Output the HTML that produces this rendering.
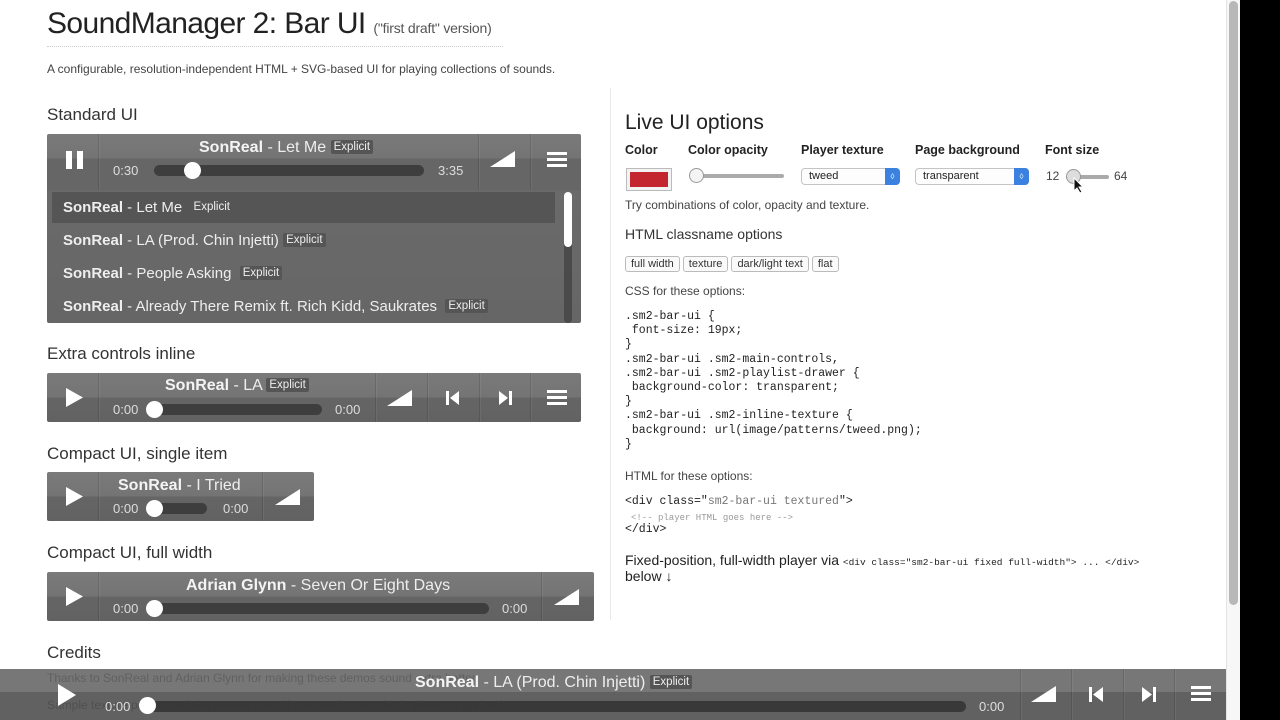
<!DOCTYPE html>
<html><head><meta charset="utf-8"><style>
*{margin:0;padding:0;box-sizing:border-box}
body{width:1280px;height:720px;position:relative;overflow:hidden;background:#fff;font-family:"Liberation Sans",sans-serif;color:#333}
.a{position:absolute;white-space:nowrap}
.pl{position:absolute;background:linear-gradient(#7a7a7a 0,#747474 50%,#656565 50%,#626262 100%);border-radius:2px}
.dv{position:absolute;top:0;bottom:0;width:1px;background:rgba(0,0,0,.12);box-shadow:1px 0 0 rgba(255,255,255,.06)}
.t{position:absolute;color:#eee;font-size:16px;white-space:nowrap}
.t b{color:#f4f4f4}
.ex{font-size:11.5px;background:#555;color:#eee;padding:1px 3px;border-radius:2px;vertical-align:2px}
.tm{position:absolute;color:#ddd;font-size:13px}
.bar{position:absolute;height:11px;border-radius:6px;background:#3e3e3e}
.knob{position:absolute;width:17px;height:17px;border-radius:50%;background:#fff}
.ic{position:absolute}
.h2{position:absolute;font-size:17px;color:#333;white-space:nowrap}
.lb{position:absolute;font-size:12.5px;font-weight:bold;color:#222}
.mono{font-family:"Liberation Mono",monospace;font-size:11.5px;color:#222;line-height:14.2px;white-space:pre}
.sm{font-size:12px;color:#444}
.btn{display:inline-block;border:1px solid #bbb;border-radius:3px;padding:1px 5px;font-size:11px;color:#333;margin-right:3px;background:#fafafa}
.row{position:absolute;left:5px;right:26px;height:31px;color:#eee;font-size:15px;padding-left:11px;line-height:31px}
</style></head><body>

<div class="a" style="left:47px;top:7px;font-size:30px;color:#222;letter-spacing:-0.6px">SoundManager 2: Bar UI <span style="font-size:14px;color:#555;letter-spacing:-0.2px">("first draft" version)</span></div>
<div class="a" style="left:47px;top:46px;width:456px;border-top:1px dotted #ccc"></div>
<div class="a" style="left:47px;top:62px;font-size:12px;color:#444">A configurable, resolution-independent HTML + SVG-based UI for playing collections of sounds.</div>
<div class="a" style="left:610px;top:88px;width:1px;height:532px;background:#e8e8e8"></div>

<div class="h2" style="left:47px;top:105px">Standard UI</div>
<!-- player 1 -->
<div class="pl" style="left:47px;top:134px;width:534px;height:189px;background:linear-gradient(#7a7a7a 0,#747474 13%,#666 13%,#666 30%,#6a6a6a 30%,#666 100%)">
  <div class="dv" style="left:51px;height:56px"></div>
  <div class="dv" style="left:431px;height:56px"></div>
  <div class="dv" style="left:483px;height:56px"></div>
  <svg class="ic" style="left:19px;top:17px" width="18" height="20"><rect x="0" y="0" width="6" height="18" fill="#fff"/><rect x="11" y="0" width="6" height="18" fill="#fff"/></svg>
  <div class="t" style="left:152px;top:5px"><b>SonReal</b> - Let Me <span class="ex">Explicit</span></div>
  <div class="tm" style="left:66px;top:29px">0:30</div>
  <div class="bar" style="left:107px;top:31px;width:270px"></div>
  <div class="knob" style="left:137px;top:28px"></div>
  <div class="tm" style="left:391px;top:29px">3:35</div>
  <svg class="ic" style="left:443px;top:17px" width="26" height="16"><polygon points="0,16 25,16 25,0" fill="#fff"/></svg>
  <svg class="ic" style="left:500px;top:18px" width="20" height="16"><rect y="0" width="20" height="3" fill="#fff"/><rect y="6" width="20" height="3" fill="#fff"/><rect y="12" width="20" height="3" fill="#fff"/></svg>
  <div class="row" style="top:58px;background:#555"><b>SonReal</b> - Let Me &nbsp;<span class="ex">Explicit</span></div>
  <div class="row" style="top:91px"><b>SonReal</b> - LA (Prod. Chin Injetti) <span class="ex">Explicit</span></div>
  <div class="row" style="top:124px"><b>SonReal</b> - People Asking &nbsp;<span class="ex">Explicit</span></div>
  <div class="row" style="top:157px"><b>SonReal</b> - Already There Remix ft. Rich Kidd, Saukrates &nbsp;<span class="ex">Explicit</span></div>
  <div class="a" style="left:517px;top:58px;width:8px;height:131px;background:#4a4a4a;border-radius:4px"></div>
  <div class="a" style="left:517px;top:58px;width:8px;height:55px;background:#fff;border-radius:4px"></div>
</div>

<div class="h2" style="left:47px;top:344px">Extra controls inline</div>
<div class="pl" style="left:47px;top:373px;width:534px;height:49px">
  <div class="dv" style="left:51px"></div><div class="dv" style="left:328px"></div><div class="dv" style="left:380px"></div><div class="dv" style="left:432px"></div><div class="dv" style="left:483px"></div>
  <svg class="ic" style="left:19px;top:15px" width="18" height="20"><polygon points="0,0 17,9.5 0,19" fill="#fff"/></svg>
  <div class="t" style="left:118px;top:4px"><b>SonReal</b> - LA <span class="ex">Explicit</span></div>
  <div class="tm" style="left:66px;top:29px">0:00</div>
  <div class="bar" style="left:100px;top:31px;width:175px"></div>
  <div class="knob" style="left:99px;top:28px"></div>
  <div class="tm" style="left:288px;top:29px">0:00</div>
  <svg class="ic" style="left:340px;top:17px" width="26" height="16"><polygon points="0,16 25,16 25,0" fill="#fff"/></svg>
  <svg class="ic" style="left:399px;top:18px" width="14" height="14"><rect x="0" y="0" width="3" height="14" fill="#fff"/><polygon points="13,0 13,14 4,7" fill="#fff"/></svg>
  <svg class="ic" style="left:451px;top:18px" width="14" height="14"><rect x="11" y="0" width="3" height="14" fill="#fff"/><polygon points="1,0 1,14 10,7" fill="#fff"/></svg>
  <svg class="ic" style="left:500px;top:17px" width="20" height="16"><rect y="0" width="20" height="3" fill="#fff"/><rect y="6" width="20" height="3" fill="#fff"/><rect y="12" width="20" height="3" fill="#fff"/></svg>
</div>

<div class="h2" style="left:47px;top:444px">Compact UI, single item</div>
<div class="pl" style="left:47px;top:472px;width:267px;height:49px">
  <div class="dv" style="left:51px"></div><div class="dv" style="left:215px"></div>
  <svg class="ic" style="left:19px;top:15px" width="18" height="20"><polygon points="0,0 17,9.5 0,19" fill="#fff"/></svg>
  <div class="t" style="left:71px;top:5px"><b>SonReal</b> - I Tried</div>
  <div class="tm" style="left:66px;top:29px">0:00</div>
  <div class="bar" style="left:100px;top:31px;width:60px"></div>
  <div class="knob" style="left:99px;top:28px"></div>
  <div class="tm" style="left:176px;top:29px">0:00</div>
  <svg class="ic" style="left:228px;top:17px" width="26" height="16"><polygon points="0,16 25,16 25,0" fill="#fff"/></svg>
</div>

<div class="h2" style="left:47px;top:543px">Compact UI, full width</div>
<div class="pl" style="left:47px;top:572px;width:547px;height:49px">
  <div class="dv" style="left:51px"></div><div class="dv" style="left:494px"></div>
  <svg class="ic" style="left:19px;top:15px" width="18" height="20"><polygon points="0,0 17,9.5 0,19" fill="#fff"/></svg>
  <div class="t" style="left:139px;top:5px"><b>Adrian Glynn</b> - Seven Or Eight Days</div>
  <div class="tm" style="left:66px;top:29px">0:00</div>
  <div class="bar" style="left:100px;top:31px;width:342px"></div>
  <div class="knob" style="left:99px;top:28px"></div>
  <div class="tm" style="left:455px;top:29px">0:00</div>
  <svg class="ic" style="left:507px;top:17px" width="26" height="16"><polygon points="0,16 25,16 25,0" fill="#fff"/></svg>
</div>

<div class="h2" style="left:47px;top:643px">Credits</div>
<div class="a sm" style="left:47px;top:671px">Thanks to SonReal and Adrian Glynn for making these demos sound extra better.</div>
<div class="a sm" style="left:47px;top:698px">Sample texture pattern: subtlepatterns.com. If you need more, that's where to get 'em!</div>

<!-- right column -->
<div class="a" style="left:625px;top:111px;font-size:21px;color:#222">Live UI options</div>
<div class="lb" style="left:625px;top:143px">Color</div>
<div class="lb" style="left:688px;top:143px">Color opacity</div>
<div class="lb" style="left:801px;top:143px">Player texture</div>
<div class="lb" style="left:915px;top:143px">Page background</div>
<div class="lb" style="left:1045px;top:143px">Font size</div>
<div class="a" style="left:626px;top:168px;width:46px;height:23px;border:1px solid #bbb;background:#f3f3f3;padding:3px"><div style="width:100%;height:100%;background:#c3262f"></div></div>
<div class="a" style="left:694px;top:174px;width:90px;height:4px;background:#aaa;border-radius:2px"></div>
<div class="a" style="left:689px;top:168px;width:15px;height:15px;border-radius:50%;background:#f4f4f4;border:1px solid #999"></div>
<div class="a" style="left:801px;top:168px;width:99px;height:17px;border:1px solid #c4c4c4;border-radius:4px;font-size:11px;line-height:15px;padding-left:7px;color:#222;background:#fdfdfd">tweed<div style="position:absolute;right:-1px;top:-1px;width:15px;height:17px;background:#3b82e0;border-radius:0 4px 4px 0;color:#fff;font-size:8px;text-align:center;line-height:17px">◊</div></div>
<div class="a" style="left:915px;top:168px;width:114px;height:17px;border:1px solid #c4c4c4;border-radius:4px;font-size:11px;line-height:15px;padding-left:7px;color:#222;background:#fdfdfd">transparent<div style="position:absolute;right:-1px;top:-1px;width:15px;height:17px;background:#3b82e0;border-radius:0 4px 4px 0;color:#fff;font-size:8px;text-align:center;line-height:17px">◊</div></div>
<div class="a sm" style="left:1046px;top:169px">12</div>
<div class="a" style="left:1066px;top:175px;width:43px;height:4px;background:#aaa;border-radius:2px"></div>
<div class="a" style="left:1066px;top:169px;width:15px;height:15px;border-radius:50%;background:#ddd;border:1px solid #999"></div>
<div class="a sm" style="left:1114px;top:169px">64</div>
<svg class="ic" style="left:1073px;top:177px" width="12" height="17"><polygon points="1,1 1,14 4,11 7,16 9,15 6,10 10,10" fill="#111" stroke="#fff" stroke-width="1"/></svg>
<div class="a sm" style="left:625px;top:198px">Try combinations of color, opacity and texture.</div>
<div class="a" style="left:625px;top:226px;font-size:14px;color:#333">HTML classname options</div>
<div class="a" style="left:625px;top:254px"><span class="btn">full width</span><span class="btn">texture</span><span class="btn">dark/light text</span><span class="btn">flat</span></div>
<div class="a sm" style="left:625px;top:284px">CSS for these options:</div>
<div class="a mono" style="left:625px;top:310px">.sm2-bar-ui {
 font-size: 19px;
}
.sm2-bar-ui .sm2-main-controls,
.sm2-bar-ui .sm2-playlist-drawer {
 background-color: transparent;
}
.sm2-bar-ui .sm2-inline-texture {
 background: url(image/patterns/tweed.png);
}</div>
<div class="a sm" style="left:625px;top:469px">HTML for these options:</div>
<div class="a mono" style="left:625px;top:495px">&lt;div class="<span style="color:#777">sm2-bar-ui textured</span>"&gt;</div>
<div class="a mono" style="left:631px;top:511px;font-size:9px;color:#999">&lt;!-- player HTML goes here --&gt;</div>
<div class="a mono" style="left:625px;top:523px">&lt;/div&gt;</div>
<div class="a" style="left:625px;top:552px;font-size:14px;color:#222">Fixed-position, full-width player via <span style="font-family:'Liberation Mono',monospace;font-size:9.5px">&lt;div class="sm2-bar-ui fixed full-width"&gt; ... &lt;/div&gt;</span></div>
<div class="a" style="left:625px;top:568px;font-size:14px;color:#222">below ↓</div>

<!-- fixed bottom -->
<div class="pl" style="left:0;top:669px;width:1226px;height:51px;background:linear-gradient(rgba(100,100,100,.88) 0,rgba(100,100,100,.88) 45%,rgba(80,80,80,.9) 45%,rgba(80,80,80,.9) 100%);border-radius:0">
  <div class="dv" style="left:1020px"></div><div class="dv" style="left:1071px"></div><div class="dv" style="left:1123px"></div><div class="dv" style="left:1174px"></div>
  <svg class="ic" style="left:58px;top:15px" width="18" height="22"><polygon points="0,0 18,11 0,22" fill="#fff"/></svg>
  <div class="t" style="left:415px;top:5px"><b>SonReal</b> - LA (Prod. Chin Injetti) <span class="ex">Explicit</span></div>
  <div class="tm" style="left:105px;top:30px">0:00</div>
  <div class="bar" style="left:140px;top:32px;width:826px;background:rgba(50,50,50,.85)"></div>
  <div class="knob" style="left:139px;top:28px"></div>
  <div class="tm" style="left:979px;top:30px">0:00</div>
  <svg class="ic" style="left:1031px;top:17px" width="26" height="16"><polygon points="0,16 25,16 25,0" fill="#fff"/></svg>
  <svg class="ic" style="left:1089px;top:18px" width="15" height="15"><rect x="0" y="0" width="3" height="15" fill="#fff"/><polygon points="14,0 14,15 4,7.5" fill="#fff"/></svg>
  <svg class="ic" style="left:1141px;top:18px" width="15" height="15"><rect x="12" y="0" width="3" height="15" fill="#fff"/><polygon points="1,0 1,15 11,7.5" fill="#fff"/></svg>
  <svg class="ic" style="left:1191px;top:17px" width="20" height="16"><rect y="0" width="20" height="3" fill="#fff"/><rect y="6" width="20" height="3" fill="#fff"/><rect y="12" width="20" height="3" fill="#fff"/></svg>
</div>

<!-- scrollbar + black edge -->
<div class="a" style="left:1226px;top:0;width:14px;height:720px;background:#f7f7f7;border-left:1px solid #e4e4e4"></div>
<div class="a" style="left:1229px;top:1px;width:9px;height:604px;background:#b8b8b8;border-radius:5px"></div>
<div class="a" style="left:1240px;top:0;width:40px;height:720px;background:#000"></div>
</body></html>
